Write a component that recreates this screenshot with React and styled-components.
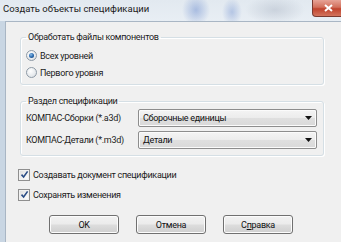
import React from "react";
import styled, { createGlobalStyle } from "styled-components";

const Global = createGlobalStyle`
  html, body { margin: 0; padding: 0; background: #f0f0f0; }
  body { font-family: Roboto, "Noto Sans", sans-serif; }
`;

const Window = styled.div`
  width: 341px;
  height: 242px;
  display: flex;
  flex-direction: column;
  overflow: hidden;
  background: #c9d6e3;
  font-family: Roboto, "Noto Sans", sans-serif;
  font-size: 9px;
  letter-spacing: -0.3px;
  color: #1b1b1b;
`;

const TitleBar = styled.div`
  height: 21px;
  flex: none;
  display: flex;
  align-items: flex-start;
  letter-spacing: 0;
  background:
    radial-gradient(ellipse 14px 16px at 196px 10px, rgba(120,150,210,0.55), rgba(120,150,210,0) 100%),
    radial-gradient(ellipse 10px 14px at 232px 12px, rgba(120,150,210,0.45), rgba(120,150,210,0) 100%),
    radial-gradient(ellipse 30px 14px at 275px 10px, rgba(170,180,195,0.45), rgba(170,180,195,0) 100%),
    linear-gradient(180deg, #e2e9f0 0%, #e8eef4 100%);
`;

const Title = styled.span`
  margin: 2px 0 0 3px;
  font-size: 9.5px;
  line-height: 14px;
  color: #1a1a1a;
  white-space: nowrap;
`;

const CloseButton = styled.div`
  margin-left: auto;
  margin-right: -4px;
  width: 33px;
  height: 17px;
  border: 1px solid #7a3a30;
  border-top: none;
  border-radius: 0 0 4px 4px;
  background: linear-gradient(180deg, #e7a396 0%, #d2705c 45%, #c0432d 55%, #d2745e 100%);
  display: flex;
  align-items: center;
  justify-content: center;
  box-sizing: border-box;
`;

const Body = styled.div`
  flex: 1;
  display: flex;
  padding-left: 5px;
`;

const Client = styled.div`
  flex: 1;
  background: #f0f0f0;
  border-left: 1px solid #a9b6c4;
  border-top: 1px solid #a9b6c4;
  padding: 8px 18px 0 14px;
  display: flex;
  flex-direction: column;
`;

const Group = styled.fieldset`
  margin: ${(p) => p.$mt || 0}px 0 0 0;
  padding: ${(p) => p.$pt}px 6px ${(p) => p.$pb}px 4px;
  border: 1px solid #d5dfe5;
  border-radius: 3px;
  box-shadow: inset 1px 1px 0 #fff, 1px 1px 0 #fff;
  min-width: 0;
  display: flex;
  flex-direction: column;
  gap: ${(p) => p.$gap || 0}px;
`;

const Legend = styled.legend`
  padding: 0 2px;
  margin-left: 1px;
  line-height: 14px;
`;

const OptionRow = styled.label`
  height: 17px;
  display: flex;
  align-items: center;
  gap: 3px;
  padding-left: ${(p) => p.$indent || 0}px;
`;

const Radio = styled.span`
  width: 9px;
  height: 9px;
  border-radius: 50%;
  border: 1px solid #8e9aa6;
  background: radial-gradient(circle at 40% 35%, #ffffff 0%, #e2e6ea 70%, #cfd5db 100%);
  display: flex;
  align-items: center;
  justify-content: center;
  flex: none;
  &::after {
    content: "";
    width: 5px;
    height: 5px;
    border-radius: 50%;
    display: ${(p) => (p.$on ? "block" : "none")};
    background: radial-gradient(circle at 40% 35%, #8fc0ea 0%, #2a6ab0 50%, #163e6e 100%);
  }
`;

const FieldRow = styled.div`
  height: 18px;
  display: flex;
  align-items: center;
  padding-left: 1px;
`;

const FieldLabel = styled.span`
  width: 112px;
  flex: none;
  white-space: nowrap;
`;

const Combo = styled.div`
  width: 179px;
  height: 18px;
  box-sizing: border-box;
  border: 1px solid #8d8d8d;
  border-radius: 2px;
  background: linear-gradient(180deg, #f4f4f4 0%, #ececec 48%, #dfdfdf 52%, #d9d9d9 100%);
  box-shadow: inset 0 0 0 1px #fbfbfb;
  display: flex;
  align-items: center;
  padding: 0 4px 0 4px;
  color: #111;
`;

const ComboText = styled.span`
  flex: 1;
  white-space: nowrap;
`;

const CheckRow = styled.label`
  height: 15px;
  display: flex;
  align-items: center;
  gap: 3px;
  margin: ${(p) => p.$mt}px 0 0 -2px;
`;

const CheckBox = styled.span`
  width: 12px;
  height: 12px;
  box-sizing: border-box;
  border: 1px solid #8f8f8f;
  background: linear-gradient(135deg, #dcdcdc 0%, #f4f4f4 60%, #ffffff 100%);
  box-shadow: inset 0 0 0 1px #f2f2f2;
  display: flex;
  align-items: center;
  justify-content: center;
  flex: none;
`;

const ButtonRow = styled.div`
  margin-top: 13px;
  display: flex;
  gap: 17px;
  padding-left: 29px;
`;

const Button = styled.button`
  width: 70px;
  height: 19px;
  box-sizing: border-box;
  border: 1px solid #707070;
  border-radius: 3px;
  background: linear-gradient(180deg, #f2f2f2 0%, #ebebeb 48%, #dddddd 52%, #cfcfcf 100%);
  box-shadow: inset 0 0 0 1px #fcfcfc;
  font-family: inherit;
  font-size: 9px;
  letter-spacing: inherit;
  color: #111;
  padding: 0;
  line-height: 16px;
`;

const Access = styled.span`
  text-decoration: underline;
`;

const Arrow = () => (
  <svg width="7" height="4" viewBox="0 0 7 4">
    <path d="M0 0 H7 L3.5 4 Z" fill="#111" />
  </svg>
);

const Check = () => (
  <svg width="9" height="9" viewBox="0 0 9 9">
    <path d="M1.5 4.6 L3.6 7 L7.6 1.4" fill="none" stroke="#2b4d86" strokeWidth="1.6" />
  </svg>
);

export default function App() {
  return (
    <Window>
      <Global />
      <TitleBar>
        <Title>Создать объекты спецификации</Title>
        <CloseButton>
          <svg width="9" height="8" viewBox="0 0 9 8">
            <path d="M1 1 L8 7 M8 1 L1 7" stroke="#fff" strokeWidth="2" />
          </svg>
        </CloseButton>
      </TitleBar>
      <Body>
        <Client>
          <Group $pt={3} $pb={3}>
            <Legend>Обработать файлы компонентов</Legend>
            <OptionRow $indent={1}>
              <Radio $on />
              Всех уровней
            </OptionRow>
            <OptionRow $indent={1}>
              <Radio />
              Первого уровня
            </OptionRow>
          </Group>
          <Group $mt={9} $pt={1} $pb={6} $gap={4}>
            <Legend>Раздел спецификации</Legend>
            <FieldRow>
              <FieldLabel>КОМПАС-Сборки (*.a3d)</FieldLabel>
              <Combo>
                <ComboText>Сборочные единицы</ComboText>
                <Arrow />
              </Combo>
            </FieldRow>
            <FieldRow>
              <FieldLabel>КОМПАС-Детали (*.m3d)</FieldLabel>
              <Combo>
                <ComboText>Детали</ComboText>
                <Arrow />
              </Combo>
            </FieldRow>
          </Group>
          <CheckRow $mt={11}>
            <CheckBox><Check /></CheckBox>
            Создавать документ спецификации
          </CheckRow>
          <CheckRow $mt={5}>
            <CheckBox><Check /></CheckBox>
            Сохранять изменения
          </CheckRow>
          <ButtonRow>
            <Button>OK</Button>
            <Button>Отмена</Button>
            <Button>
              С<Access>п</Access>равка
            </Button>
          </ButtonRow>
        </Client>
      </Body>
    </Window>
  );
}
